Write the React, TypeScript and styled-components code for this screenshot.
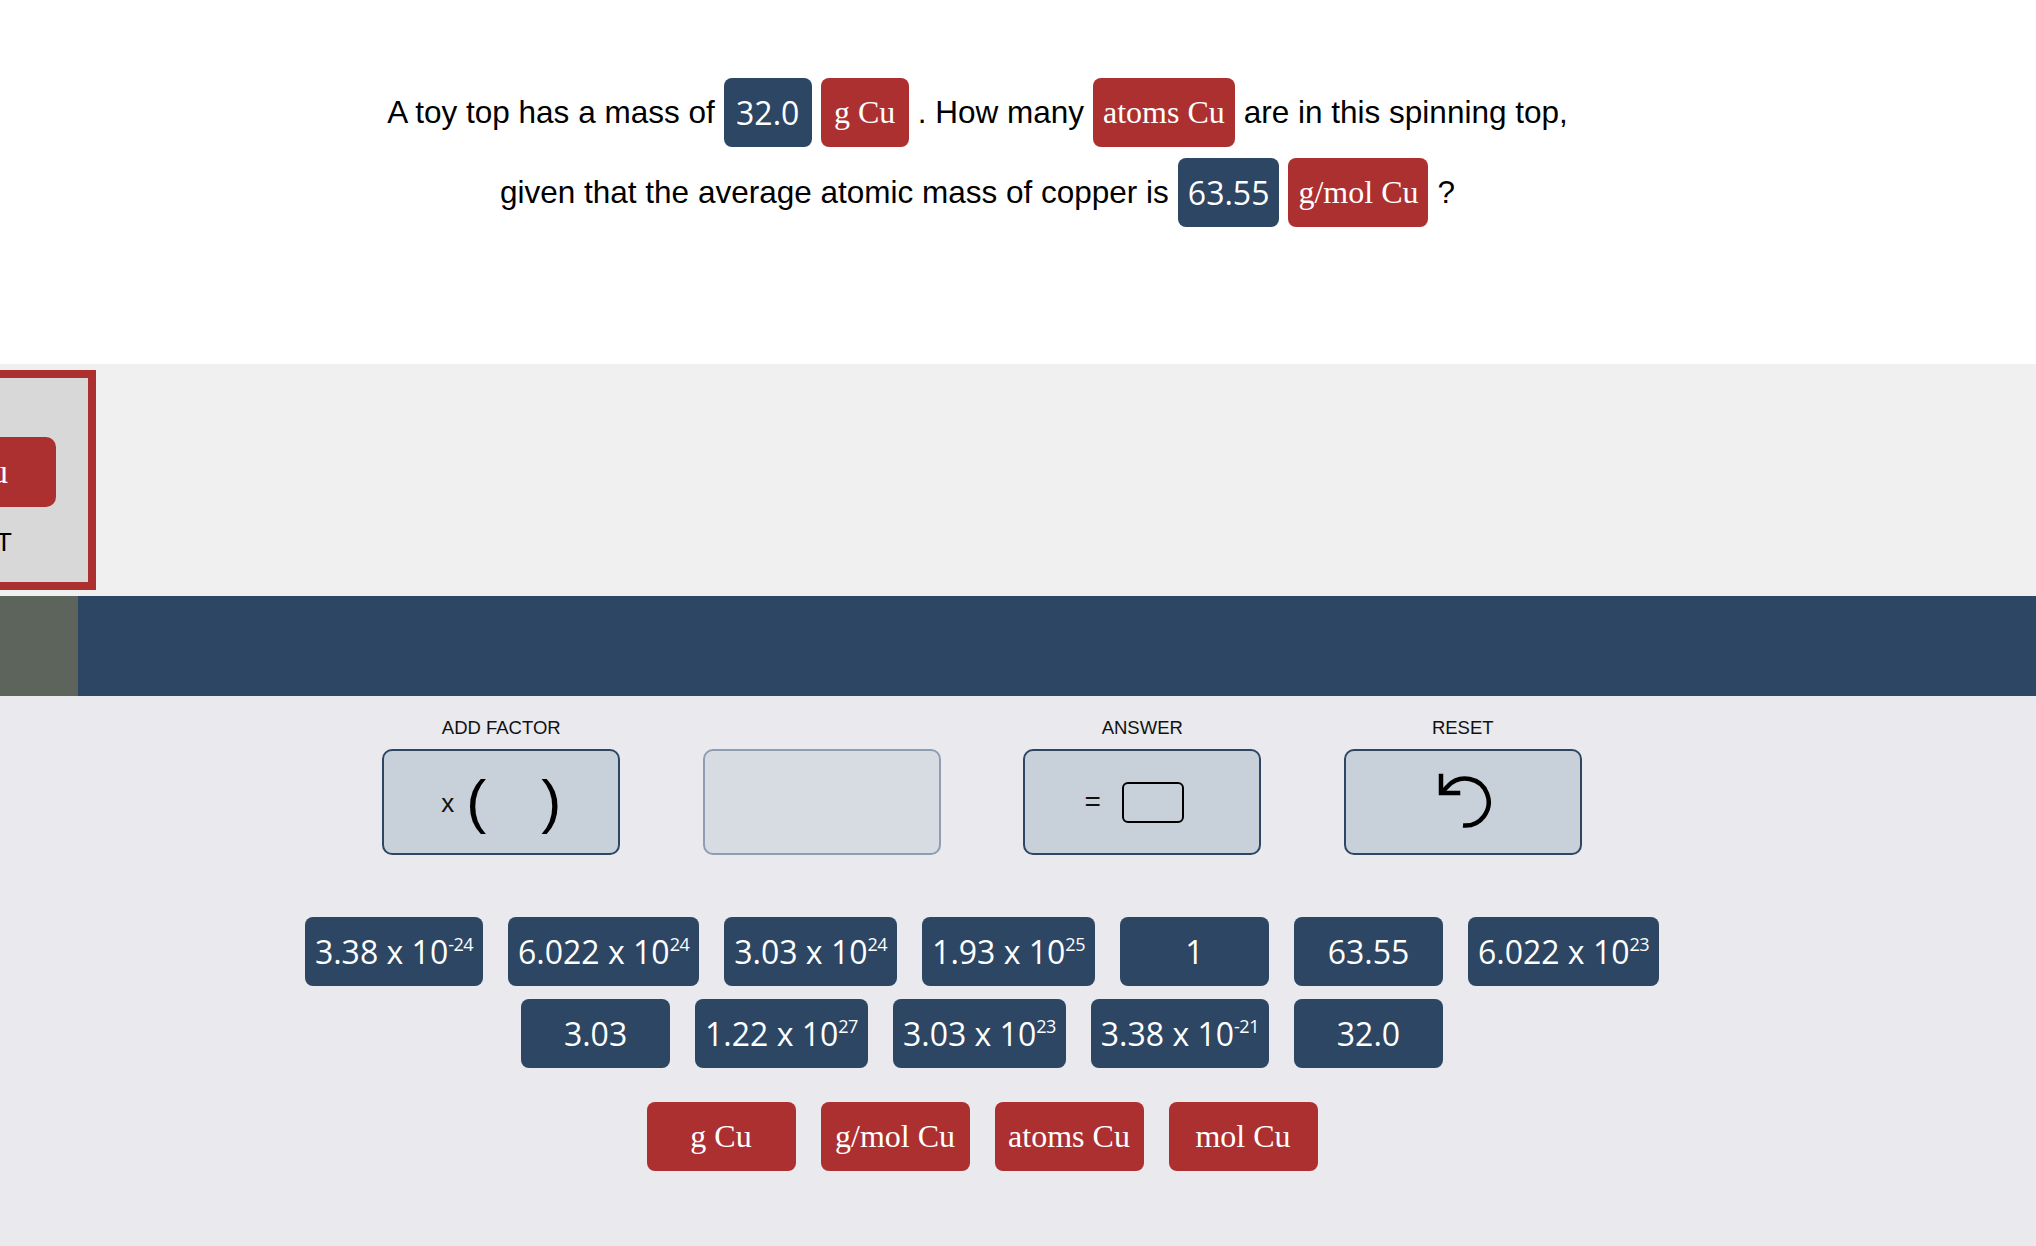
import styled, { createGlobalStyle } from 'styled-components';

const Palette = {
  Blue: '#2c4664',
  Red: '#ad3031',
  Moss: '#5d645c',
  White: '#ffffff',
  Stage: '#f0f0f0',
  Bench: '#e9e9ee',
  Key: '#c8d0da',
  KeyIdle: '#d7dce3',
  KeyIdleBorder: '#8e9db1',
  Ink: '#111111',
};

const GlobalStyle = createGlobalStyle`
  html, body {
    margin: 0;
    padding: 0;
    background: ${Palette.White};
    font-family: "Liberation Sans", Arial, sans-serif;
  }
`;

type Amount = { value: string; power?: string };

const numbers: Amount[] = [
  { value: '3.38', power: '-24' },
  { value: '6.022', power: '24' },
  { value: '3.03', power: '24' },
  { value: '1.93', power: '25' },
  { value: '1' },
  { value: '63.55' },
  { value: '6.022', power: '23' },
  { value: '3.03' },
  { value: '1.22', power: '27' },
  { value: '3.03', power: '23' },
  { value: '3.38', power: '-21' },
  { value: '32.0' },
];

const units = ['g Cu', 'g/mol Cu', 'atoms Cu', 'mol Cu'];

const Amount = ({ amount }: { amount: Amount }) => (
  <>
    {amount.value}
    {amount.power && (
      <>
        {' x 10'}
        <Power>{amount.power}</Power>
      </>
    )}
  </>
);

const ResetIcon = () => (
  <svg width="62" height="62" viewBox="-31 -31 62 62" fill="none">
    <path
      d="M-22 -9 L-15 -16 A23.5 23.5 0 1 1 0 23.5"
      stroke="#000"
      strokeWidth="4.5"
    />
    <path
      d="M-22 -26 L-22 -9 L-5 -9"
      stroke="#000"
      strokeWidth="4.5"
      strokeLinecap="square"
    />
  </svg>
);

const App = () => {
  return (
    <Page>
      <GlobalStyle />
      <Question>
        <QuestionLine>
          <Words>A toy top has a mass of</Words>
          <Chip $tone="value">32.0</Chip>
          <Chip $tone="unit">g Cu</Chip>
          <Words>. How many</Words>
          <Chip $tone="unit">atoms Cu</Chip>
          <Words>are in this spinning top,</Words>
        </QuestionLine>
        <QuestionLine>
          <Words>given that the average atomic mass of copper is</Words>
          <Chip $tone="value">63.55</Chip>
          <Chip $tone="unit">g/mol Cu</Chip>
          <Words>?</Words>
        </QuestionLine>
      </Question>

      <Stage>
        <DragCard>
          <CardChip>g Cu</CardChip>
          <CardLabel>START</CardLabel>
        </DragCard>
      </Stage>

      <Progress>
        <ProgressFill />
      </Progress>

      <Bench>
        <Toolbar>
          <Tool>
            <ToolLabel>ADD FACTOR</ToolLabel>
            <ToolButton>
              <Times>x</Times>
              <Paren>(</Paren>
              <ParenGap />
              <Paren>)</Paren>
            </ToolButton>
          </Tool>
          <Tool>
            <ToolLabel>&nbsp;</ToolLabel>
            <ToolButton $idle />
          </Tool>
          <Tool>
            <ToolLabel>ANSWER</ToolLabel>
            <ToolButton>
              <Equals>=</Equals>
              <AnswerSlot />
            </ToolButton>
          </Tool>
          <Tool>
            <ToolLabel>RESET</ToolLabel>
            <ToolButton>
              <ResetIcon />
            </ToolButton>
          </Tool>
        </Toolbar>

        <NumberBank>
          {numbers.map((n, i) => (
            <BankChip key={i} $tone="value">
              <Amount amount={n} />
            </BankChip>
          ))}
        </NumberBank>

        <UnitBank>
          {units.map((u) => (
            <BankChip key={u} $tone="unit">
              {u}
            </BankChip>
          ))}
        </UnitBank>
      </Bench>
    </Page>
  );
};

export default App;

const Page = styled.div`
  width: 100%;
  min-height: 1246px;
  display: flex;
  flex-direction: column;
  background: ${Palette.Bench};
  overflow: hidden;
`;

const Question = styled.div`
  height: 364px;
  box-sizing: border-box;
  padding: 78px 81px 0 0;
  background: ${Palette.White};
  display: flex;
  flex-direction: column;
  gap: 11px;
`;

const QuestionLine = styled.div`
  height: 69px;
  display: flex;
  justify-content: center;
  align-items: center;
  gap: 9px;
`;

const Words = styled.span`
  font-size: 31.5px;
  color: #000;
  white-space: nowrap;
`;

const Chip = styled.span<{ $tone: 'value' | 'unit' }>`
  display: inline-flex;
  align-items: center;
  justify-content: center;
  box-sizing: border-box;
  height: 69px;
  min-width: 88px;
  padding: 0 10px;
  border-radius: 8px;
  color: ${Palette.White};
  font-size: 32px;
  white-space: nowrap;
  background: ${(p) => (p.$tone === 'value' ? Palette.Blue : Palette.Red)};
  font-family: ${(p) =>
    p.$tone === 'value'
      ? '"Open Sans", sans-serif'
      : '"Liberation Serif", "Times New Roman", serif'};
`;

const BankChip = styled(Chip)`
  min-width: 149px;
`;

const Power = styled.span`
  font-size: 18px;
  letter-spacing: -0.5px;
  align-self: flex-start;
  margin-top: 15px;
`;

const Stage = styled.div`
  position: relative;
  height: 232px;
  background: ${Palette.Stage};
`;

const DragCard = styled.div`
  position: absolute;
  top: 6px;
  left: -145px;
  width: 241px;
  height: 220px;
  box-sizing: border-box;
  border: 8px solid ${Palette.Red};
  background: #d8d8d8;
  display: flex;
  flex-direction: column;
  align-items: center;
  padding-top: 59px;
`;

const CardChip = styled.div`
  width: 161px;
  height: 70px;
  border-radius: 10px;
  background: ${Palette.Red};
  color: ${Palette.White};
  display: flex;
  align-items: center;
  justify-content: center;
  font-family: "Liberation Serif", "Times New Roman", serif;
  font-size: 34px;
`;

const CardLabel = styled.div`
  margin: 20px 10px 0 0;
  font-size: 26px;
  color: #000;
`;

const Progress = styled.div`
  height: 100px;
  background: ${Palette.Blue};
  display: flex;
`;

const ProgressFill = styled.div`
  width: 78px;
  background: ${Palette.Moss};
`;

const Bench = styled.div`
  flex: 1;
  background: ${Palette.Bench};
  padding: 21px 72px 60px 0;
  display: flex;
  flex-direction: column;
  align-items: center;
`;

const Toolbar = styled.div`
  display: grid;
  grid-template-columns: repeat(4, 238px);
  column-gap: 82.5px;
`;

const Tool = styled.div`
  display: flex;
  flex-direction: column;
  align-items: center;
  gap: 11px;
`;

const ToolLabel = styled.div`
  font-size: 18.5px;
  line-height: 21px;
  color: ${Palette.Ink};
`;

const ToolButton = styled.div<{ $idle?: boolean }>`
  width: 238px;
  height: 106px;
  box-sizing: border-box;
  border-radius: 10px;
  border: 2px solid ${(p) => (p.$idle ? Palette.KeyIdleBorder : Palette.Blue)};
  background: ${(p) => (p.$idle ? Palette.KeyIdle : Palette.Key)};
  display: flex;
  align-items: center;
  justify-content: center;
`;

const Times = styled.span`
  font-size: 26px;
  color: ${Palette.Ink};
  margin-right: 12px;
  margin-top: 2px;
`;

const Paren = styled.span`
  font-size: 60px;
  line-height: 1;
  color: #000;
`;

const ParenGap = styled.span`
  width: 55px;
`;

const Equals = styled.span`
  font-size: 28px;
  color: ${Palette.Ink};
  margin-right: 21px;
`;

const AnswerSlot = styled.span`
  width: 62px;
  height: 41px;
  box-sizing: border-box;
  border: 2px solid #000;
  border-radius: 6px;
  margin-right: 16px;
`;

const NumberBank = styled.div`
  max-width: 1400px;
  margin-top: 62px;
  display: flex;
  flex-wrap: wrap;
  justify-content: center;
  gap: 13px 25px;
`;

const UnitBank = styled.div`
  margin-top: 34px;
  display: flex;
  justify-content: center;
  gap: 25px;
`;
